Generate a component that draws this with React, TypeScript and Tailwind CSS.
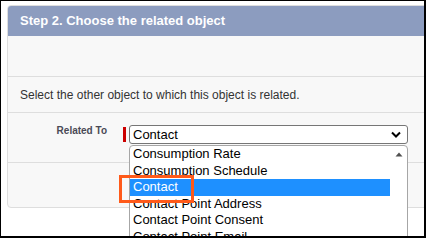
const options = [
  'Consumption Rate',
  'Consumption Schedule',
  'Contact',
  'Contact Point Address',
  'Contact Point Consent',
  'Contact Point Email',
  'Contact Point Phone',
];

export default function App() {
  const selected = 'Contact';

  return (
    <div
      className="relative w-[426px] h-[238px] overflow-hidden bg-white border-t border-l border-r-2 border-b-2 border-black pl-[6px] pt-[4px]"
      style={{ fontFamily: '"Liberation Sans", Arial, sans-serif' }}
    >
      {/* Wizard panel */}
      <div className="w-[440px] rounded-[4px] border border-[#dedede] bg-[#f8f8f8]">
        {/* Header */}
        <div className="h-[30px] rounded-tl-[3px] bg-[#8c9cbf] flex items-center pl-[12px]">
          <h2 className="text-[13px] font-bold text-white">Step 2. Choose the related object</h2>
        </div>

        <div className="h-[41px] border-b border-[#dedede]" />

        <div className="h-[36px] flex items-center pl-[12px] border-b border-[#dedede]">
          <p className="text-[12px] text-[#333]">Select the other object to which this object is related.</p>
        </div>

        {/* Field row */}
        <div className="h-[50px] flex items-start pt-[12px] border-b border-[#dedede]">
          <label className="w-[99px] text-right text-[10px] leading-[12px] font-bold text-[#4a4a56]">
            Related To
          </label>
          <div className="ml-[16px] mt-[2px] w-[3px] h-[15px] bg-[#c00]" />
          <div className="relative ml-[3px] w-[279px]">
            <div className="h-[19px] flex items-center justify-between bg-white border border-[#767676] rounded-[3px] pl-[3px] pr-[6px] text-[13px] text-black">
              <span>{selected}</span>
              <svg width="10" height="7" viewBox="0 0 10 7">
                <path d="M1 1.5 L5 5.5 L9 1.5" fill="none" stroke="#000" strokeWidth="2" />
              </svg>
            </div>

            {/* Open dropdown list */}
            <div className="absolute left-0 top-[20px] z-10 w-full h-[110px] flex bg-white border border-[#a6a6a6] rounded-t-[4px] overflow-hidden">
              <ul className="flex-1">
                {options.map((o) => (
                  <li
                    key={o}
                    className={`h-[16.6px] leading-[16.6px] pl-[3px] text-[13px] ${
                      o === selected ? 'bg-[#1e90ff] text-white' : 'text-black'
                    }`}
                  >
                    {o}
                  </li>
                ))}
              </ul>
              <div className="w-[17px] flex justify-center pt-[6px]">
                <svg width="8" height="5" viewBox="0 0 8 5">
                  <path d="M0.5 4.5 L4 0.5 L7.5 4.5 Z" fill="#505050" />
                </svg>
              </div>
            </div>
          </div>
        </div>

        <div className="h-[44px]" />
      </div>

      {/* Annotation */}
      <div className="absolute left-[118px] top-[174px] w-[75px] h-[28px] border-[3px] border-[#ff5a1a] z-20" />
    </div>
  );
}
